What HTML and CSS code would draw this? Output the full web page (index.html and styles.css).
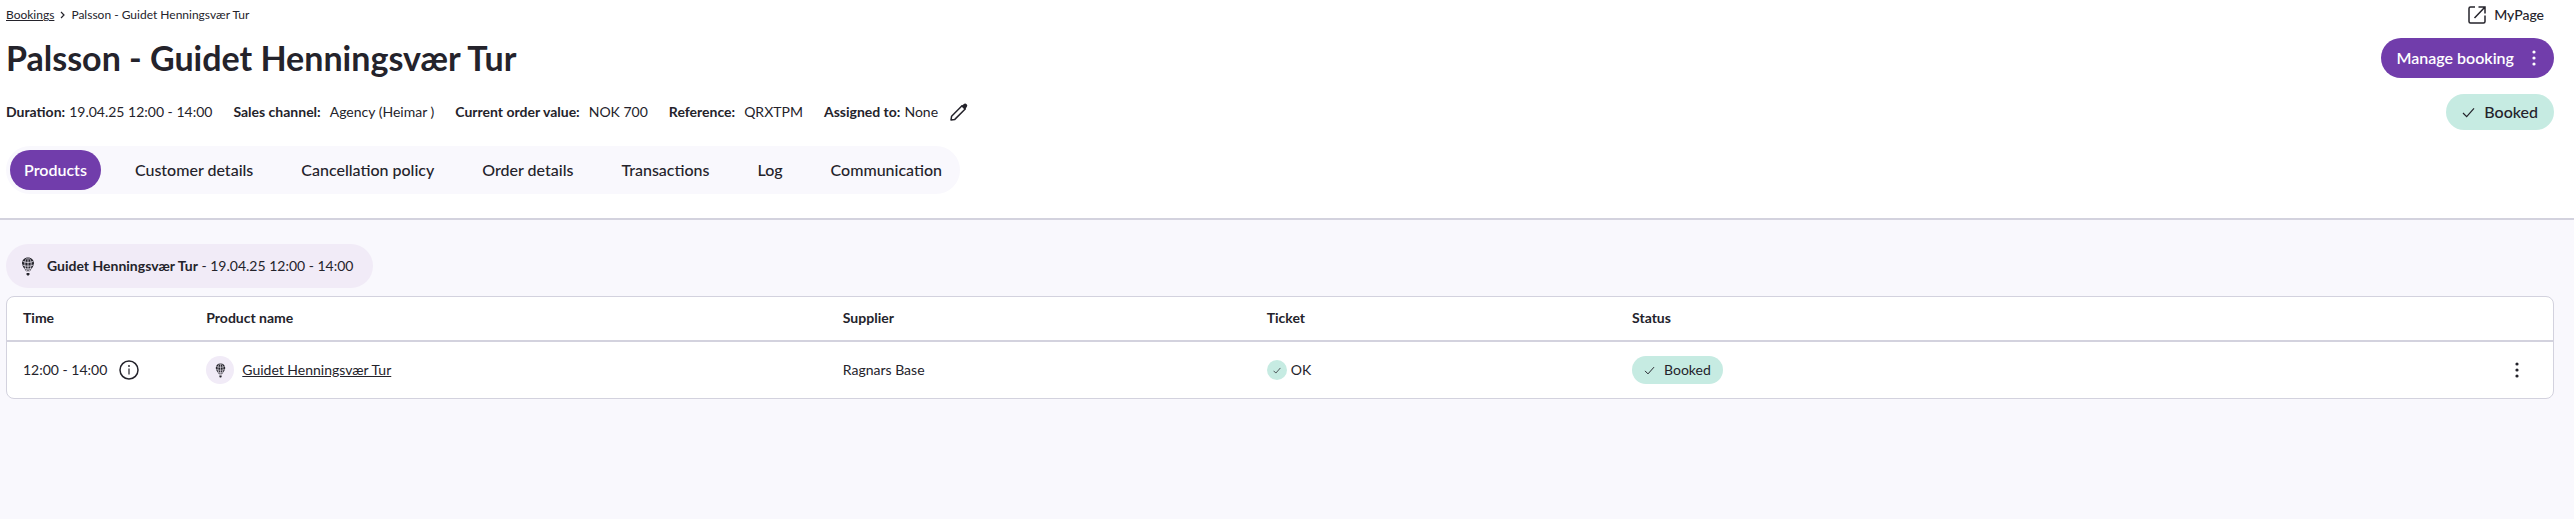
FILE: index.html
```html
<!DOCTYPE html>
<html lang="en">
<head>
<meta charset="utf-8">
<meta name="viewport" content="width=device-width, initial-scale=1">
<title>Palsson - Guidet Henningsvær Tur</title>
<link rel="stylesheet" href="styles.css">
</head>
<body>
<svg class="sprite" aria-hidden="true">
  <symbol id="check" viewBox="0 0 14 12"><path d="M1 6.500 5 10.500 13 1.500" fill="none" stroke="currentColor" stroke-width="1.300"/></symbol>
  <symbol id="dots" viewBox="0 0 4 16"><circle cx="2" cy="2" r="1.600"/><circle cx="2" cy="8" r="1.600"/><circle cx="2" cy="14" r="1.600"/></symbol>
  <symbol id="balloon" viewBox="0 0 14 20">
    <path d="M7 .6C3.300.6.7 3.300.7 6.700c0 2.900 2.300 5.300 4.300 8.300h4c2-3 4.300-5.400 4.300-8.300C13.300 3.300 10.700.6 7 .6Z" fill="currentColor"/>
    <path d="M7 1v14M5.700 1.400C3 4 3 9.500 5.800 15M8.300 1.400C11 4 11 9.500 8.200 15M1.300 4.600c3.500 1.500 7.900 1.500 11.400 0M1.200 8.400c3.600 1.700 8 1.700 11.600 0M3.400 12c2.400.8 4.800.8 7.200 0" fill="none" stroke="#f1ebf7" stroke-width=".8"/>
    <path d="M5.500 16.800h3v1.400L7.800 19.400H6.200l-.7-1.200Z" fill="currentColor"/>
  </symbol>
</svg>
<header class="page-header">
  <div class="top-row">
    <nav class="breadcrumb" aria-label="Breadcrumb">
      <a href="#">Bookings</a>
      <svg class="chevron" viewBox="0 0 5 8"><path class="line" d="M1 1l3 3-3 3"/></svg>
      <span>Palsson - Guidet Henningsvær Tur</span>
    </nav>
    <a class="mypage" href="#">
      <svg class="icon-18" viewBox="0 0 18 18"><path class="line line-bold" d="M7 1H2.500Q1 1 1 2.500v13Q1 17 2.500 17h13q1.500 0 1.500-1.500V9.500M10.500 1H17v6.500M17 1 6.500 12"/></svg>
      <span>MyPage</span>
    </a>
  </div>
  <div class="title-row">
    <h1>Palsson - Guidet Henningsvær Tur</h1>
    <button class="manage" type="button"><span>Manage booking</span><svg class="dots"><use href="#dots"/></svg></button>
  </div>
  <div class="meta-row">
    <div class="assignment">
      <dl class="meta">
        <div class="tight"><dt>Duration:</dt><dd>19.04.25 12:00 - 14:00</dd></div>
        <div><dt>Sales channel:</dt><dd>Agency (Heimar )</dd></div>
        <div><dt>Current order value:</dt><dd>NOK 700</dd></div>
        <div><dt>Reference:</dt><dd>QRXTPM</dd></div>
        <div class="tight"><dt>Assigned to:</dt><dd>None</dd></div>
      </dl>
      <button class="plain" type="button" aria-label="Edit assignee"><svg class="icon-18" viewBox="0 0 18 18"><path class="line line-bold" d="M1 17l.6-3.800L12 2.800l3.200 3.200L4.800 16.400Z" stroke-linejoin="round"/><path d="M11.300 3 14.300.8q1.200-.8 2.300.4 1.200 1.100.4 2.200L15 6.700Z"/></svg></button>
    </div>
    <span class="badge badge-lg"><svg class="check"><use href="#check"/></svg>Booked</span>
  </div>
  <nav class="tabs" aria-label="Booking sections">
    <a class="active" href="#" aria-current="page">Products</a>
    <a href="#">Customer details</a>
    <a href="#">Cancellation policy</a>
    <a href="#">Order details</a>
    <a href="#">Transactions</a>
    <a href="#">Log</a>
    <a href="#">Communication</a>
  </nav>
</header>
<main>
  <div class="trip"><svg class="balloon"><use href="#balloon"/></svg><span><strong>Guidet Henningsvær Tur</strong> - 19.04.25 12:00 - 14:00</span></div>
  <div class="card">
    <table>
      <colgroup><col class="c-time"><col class="c-product"><col class="c-supplier"><col class="c-ticket"><col></colgroup>
      <thead><tr><th>Time</th><th>Product name</th><th>Supplier</th><th>Ticket</th><th>Status</th></tr></thead>
      <tbody><tr>
        <td><div class="cell time">12:00 - 14:00
          <button class="plain" type="button" aria-label="Details"><svg class="icon-20" viewBox="0 0 20 20"><circle class="line line-bold" cx="10" cy="10" r="9"/><path class="line" d="M10 8.500v6"/><circle cx="10" cy="6" r=".9"/></svg></button></div></td>
        <td><div class="cell product"><span class="disc"><svg class="balloon-sm"><use href="#balloon"/></svg></span><a href="#">Guidet Henningsvær Tur</a></div></td>
        <td>Ragnars Base</td>
        <td><div class="cell ticket"><span class="ok"><svg class="check-xs"><use href="#check"/></svg></span>OK</div></td>
        <td><div class="cell status"><span class="badge badge-sm"><svg class="check-sm"><use href="#check"/></svg>Booked</span><button class="plain more" type="button" aria-label="More actions"><svg class="dots"><use href="#dots"/></svg></button></div></td>
      </tr></tbody>
    </table>
  </div>
</main>
</body>
</html>
```

FILE: styles.css
```css
* { box-sizing: border-box; }
body {
  margin: 0;
  background: #f9f8fd;
  color: #24232b;
  font-family: Lato, "Open Sans", sans-serif;
  font-size: 14px;
  line-height: 20px;
}
svg { display: block; flex: none; fill: currentColor; }
.line { fill: none; stroke: currentColor; stroke-width: 1.2; }
.line-bold { stroke-width: 1.5; }
a { color: inherit; }
button { font: inherit; cursor: pointer; }
.sprite { position: absolute; width: 0; height: 0; }

.page-header {
  background: #fff;
  border-bottom: 2px solid #d3d2de;
  padding: 5px 20px 24px 6px;
}
.top-row, .title-row, .meta-row {
  display: flex;
  align-items: center;
  justify-content: space-between;
}
.breadcrumb { display: flex; align-items: center; gap: 6px; font-size: 12px; }
.chevron { width: 5px; height: 8px; }
.mypage {
  display: flex;
  align-items: center;
  gap: 8px;
  margin-right: 10px;
  font-weight: 500;
  text-decoration: none;
}
.icon-18 { width: 18px; height: 18px; }
.icon-20 { width: 20px; height: 20px; }
.title-row { margin-top: 13px; }
h1 { margin: 0; font-size: 34px; line-height: 40px; font-weight: 700; }
.manage {
  display: flex;
  align-items: center;
  gap: 18px;
  height: 40px;
  padding: 0 18px 0 15px;
  border: 0;
  border-radius: 20px;
  background: #713dab;
  color: #fff;
  font-size: 16px;
  font-weight: 600;
}
.dots { width: 4px; height: 16px; }

.meta-row { margin-top: 16px; }
.assignment { display: flex; align-items: center; gap: 12px; }
.meta { display: flex; gap: 21px; margin: 0; }
.meta div { display: flex; gap: 9px; }
.meta .tight { gap: 4px; }
dt { font-weight: 700; }
dd { margin: 0; }
.plain { padding: 0; border: 0; background: none; color: inherit; }

.badge {
  display: flex;
  align-items: center;
  border-radius: 18px;
  background: #c6ebe2;
}
.badge-lg { height: 36px; gap: 9px; padding: 0 16px; font-size: 16px; font-weight: 500; }
.badge-sm { height: 28px; gap: 9px; padding: 0 12px; }
.check { width: 13px; height: 11px; }
.check-sm { width: 11px; height: 9px; }
.check-xs { width: 8px; height: 7px; }

.tabs {
  display: flex;
  gap: 20px;
  width: fit-content;
  margin-top: 16px;
  padding: 4px;
  border-radius: 24px;
  background: #f9f8fd;
}
.tabs a {
  padding: 10px 14px;
  border-radius: 20px;
  font-size: 16px;
  font-weight: 500;
  text-decoration: none;
}
.tabs .active { background: #713dab; color: #fff; font-weight: 600; }

main { padding: 24px 20px 24px 6px; }
.trip {
  display: flex;
  align-items: center;
  gap: 12px;
  width: fit-content;
  height: 44px;
  padding: 0 20px 0 15px;
  border-radius: 22px;
  background: #f1ebf7;
}
.balloon { width: 14px; height: 19px; }
.balloon-sm { width: 11px; height: 15px; }

.card {
  margin-top: 8px;
  border: 1px solid #d3d2de;
  border-radius: 8px;
  background: #fff;
}
table { width: 100%; table-layout: fixed; border-collapse: separate; border-spacing: 0; }
.c-time { width: 7.2%; }
.c-product { width: 25%; }
.c-supplier { width: 16.65%; }
.c-ticket { width: 14.35%; }
th {
  padding: 11px 16px 12px;
  border-bottom: 2px solid #d3d2de;
  text-align: left;
  font-weight: 700;
}
td { padding: 14px 16px; }
.cell { display: flex; align-items: center; }
.time { gap: 12px; }
.product { gap: 8px; }
.ticket { gap: 4px; }
.disc, .ok { display: grid; place-items: center; border-radius: 50%; }
.disc { width: 28px; height: 28px; background: #f1ebf7; }
.ok { width: 20px; height: 20px; background: #c6ebe2; }
.status { justify-content: space-between; }
.more { padding: 0 18px; }
```
